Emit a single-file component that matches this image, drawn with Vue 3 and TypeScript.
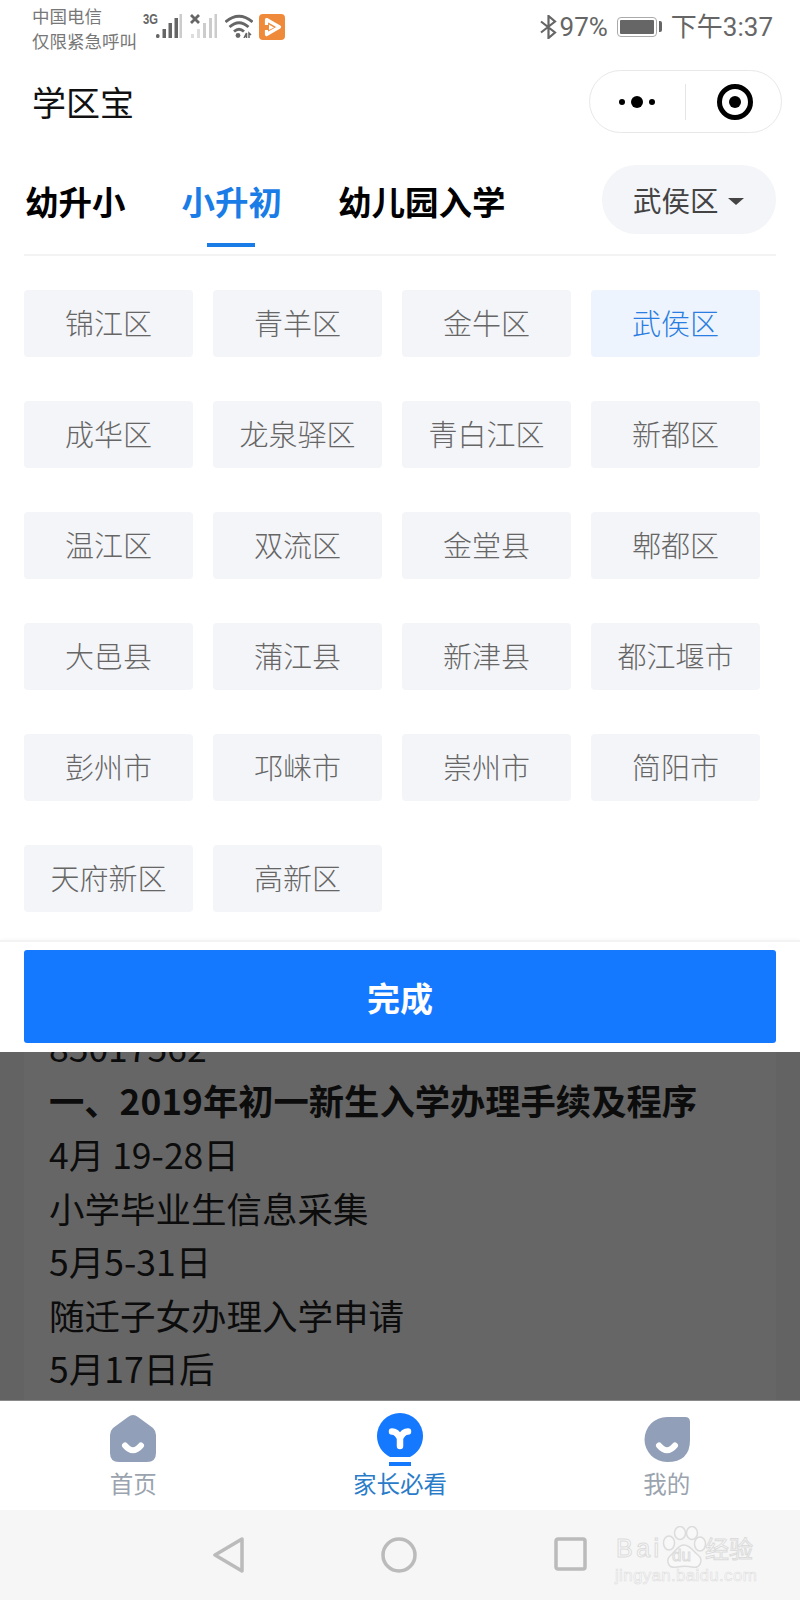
<script setup lang="ts">
const tabs = [
  { label: '幼升小', active: false },
  { label: '小升初', active: true },
  { label: '幼儿园入学', active: false },
]

const districts = [
  '锦江区', '青羊区', '金牛区', '武侯区',
  '成华区', '龙泉驿区', '青白江区', '新都区',
  '温江区', '双流区', '金堂县', '郫都区',
  '大邑县', '蒲江县', '新津县', '都江堰市',
  '彭州市', '邛崃市', '崇州市', '简阳市',
  '天府新区', '高新区',
]
const activeDistrict = '武侯区'

const articleLines = [
  { text: '85017562', bold: false },
  { text: '一、2019年初一新生入学办理手续及程序', bold: true },
  { text: '4月 19-28日', bold: false },
  { text: '小学毕业生信息采集', bold: false },
  { text: '5月5-31日', bold: false },
  { text: '随迁子女办理入学申请', bold: false },
  { text: '5月17日后', bold: false },
]
</script>

<template>
  <div class="page">
    <div class="status-bar">
      <div class="carrier">
        <div>中国电信</div>
        <div>仅限紧急呼叫</div>
      </div>
      <span class="net-type">3G</span>
      <svg class="signal" width="27" height="24" viewBox="0 0 27 24">
        <rect x="1" y="20" width="3.5" height="4" rx="1.5" fill="#666" />
        <rect x="7.5" y="15" width="3.5" height="9" fill="#666" />
        <rect x="13.5" y="9" width="3.5" height="15" fill="#666" />
        <rect x="19.5" y="4" width="3.5" height="20" fill="#666" />
        <rect x="24.5" y="0" width="2.5" height="24" fill="#ccc" />
      </svg>
      <svg class="signal signal-off" width="27" height="24" viewBox="0 0 27 24">
        <path d="M1 1l8 8M9 1l-8 8" stroke="#666" stroke-width="2.8" fill="none" />
        <rect x="1" y="20" width="3" height="4" fill="#ddd" />
        <rect x="7" y="15" width="3" height="9" fill="#ddd" />
        <rect x="13" y="9" width="3" height="15" fill="#ccc" />
        <rect x="19" y="4" width="3" height="20" fill="#ccc" />
        <rect x="24.5" y="0" width="2.5" height="24" fill="#ccc" />
      </svg>
      <svg class="wifi" width="28" height="24" viewBox="0 0 28 24" fill="none" stroke="#666" stroke-width="2.8">
        <path d="M0.5 8Q14 -3.5 27.5 8" />
        <path d="M4.5 13Q14 4.5 23.5 13" />
        <path d="M9 17.5Q14 13 19 17.5" />
        <circle cx="13" cy="21.5" r="2.4" fill="#666" stroke="none" />
        <path d="M19 24l2.5 -5v5M24 24v-5l2 2" stroke-width="1.5" />
      </svg>
      <svg class="app-badge" width="26" height="26" viewBox="0 0 26 26">
        <rect width="26" height="26" rx="4" fill="#ee8a3a" />
        <path d="M7.5 11V5.5L20.5 13L7.5 20.5V16" fill="none" stroke="#fff" stroke-width="3.2" stroke-linejoin="round" />
        <path d="M10 10.5L15 13.5L10 16Z" fill="#fff" />
      </svg>
      <div class="status-right">
        <svg width="17" height="24" viewBox="0 0 17 24" fill="none" stroke="#666" stroke-width="2.2">
          <path d="M1 6.5L15 17.5L8.5 23V1L15 6.5L1 17.5" />
        </svg>
        <span class="battery-text">97%</span>
        <div class="battery"><div class="battery-fill"></div></div>
        <span class="clock">下午3:37</span>
      </div>
    </div>

    <div class="nav-header">
      <span class="app-title">学区宝</span>
      <div class="capsule">
        <svg width="46" height="14" viewBox="0 0 46 14" fill="#000">
          <circle cx="3" cy="7" r="3" />
          <circle cx="18" cy="7" r="6" />
          <circle cx="33" cy="7" r="3" />
        </svg>
        <span class="capsule-line"></span>
        <svg width="36" height="36" viewBox="0 0 36 36">
          <circle cx="18" cy="18" r="15.5" fill="none" stroke="#000" stroke-width="5" />
          <circle cx="18" cy="18" r="6" fill="#000" />
        </svg>
      </div>
    </div>

    <div class="tabs">
      <div v-for="tab in tabs" :key="tab.label" class="tab" :class="{ 'tab--active': tab.active }">
        <span>{{ tab.label }}</span>
        <i v-if="tab.active" class="tab-line"></i>
      </div>
      <div class="area-select">
        <span>武侯区</span>
        <i class="caret"></i>
      </div>
    </div>

    <div class="district-grid">
      <div
        v-for="name in districts"
        :key="name"
        class="district"
        :class="{ 'district--active': name === activeDistrict }"
      >
        {{ name }}
      </div>
    </div>

    <div class="footer">
      <button class="done-btn">完成</button>
    </div>

    <div class="dimmed">
      <div class="article">
        <p v-for="line in articleLines" :key="line.text" :class="{ bold: line.bold }">{{ line.text }}</p>
      </div>
    </div>

    <div class="tabbar">
      <div class="tabbar-item">
        <svg width="46" height="54" viewBox="0 0 46 54">
          <path d="M18 4Q23 0 28 4L43 15Q46 18 46 22V40Q46 49 37 49H9Q0 49 0 40V22Q0 18 3 15Z" fill="#919fb8" />
          <path d="M15 32.5Q23 42 31 32.5" fill="none" stroke="#fff" stroke-width="6" stroke-linecap="round" />
        </svg>
        <span>首页</span>
      </div>
      <div class="tabbar-item tabbar-item--active">
        <svg width="46" height="54" viewBox="0 0 46 54">
          <path d="M13 44C5 40 0 32 0 23A23 23 0 0 1 46 23C46 32 41 40 33 44Z" fill="#1479ff" />
          <path d="M15 18.5C19 18.5 21 21 23 25C25 21 27 18.5 31 18.5M23 25V33" fill="none" stroke="#fff" stroke-width="6.5" stroke-linecap="round" stroke-linejoin="round" />
          <rect x="12" y="49" width="22" height="4" fill="#1479ff" />
        </svg>
        <span>家长必看</span>
      </div>
      <div class="tabbar-item">
        <svg width="46" height="54" viewBox="0 0 46 54">
          <path d="M23 4H41Q46 4 46 9V27Q46 49 23 49A22.5 22.5 0 0 1 23 4Z" fill="#919fb8" />
          <path d="M15 32.5Q23 42 31 32.5" fill="none" stroke="#fff" stroke-width="6" stroke-linecap="round" />
        </svg>
        <span>我的</span>
      </div>
    </div>

    <div class="system-nav">
      <svg width="31" height="36" viewBox="0 0 31 36">
        <path d="M29 2V34L2 18Z" fill="none" stroke="#bbb" stroke-width="3.5" stroke-linejoin="round" />
      </svg>
      <svg width="36" height="36" viewBox="0 0 36 36">
        <circle cx="18" cy="18" r="16" fill="none" stroke="#bbb" stroke-width="3.5" />
      </svg>
      <svg width="33" height="34" viewBox="0 0 33 34">
        <rect x="2" y="2" width="29" height="30" rx="2" fill="none" stroke="#bbb" stroke-width="3.5" />
      </svg>

      <div class="watermark">
        <span class="wm-bai">Bai</span>
        <svg class="wm-paw" width="50" height="50" viewBox="0 0 50 50" fill="#f8f8f8" stroke="#dcdcdc" stroke-width="1.5">
          <ellipse cx="7" cy="17" rx="5.5" ry="7" />
          <ellipse cx="18" cy="7" rx="5.5" ry="6.5" />
          <ellipse cx="30" cy="7" rx="5.5" ry="6.5" />
          <ellipse cx="38" cy="18" rx="5.5" ry="7" />
          <path d="M22 19C28 19 31 25 36 29C42 34 38 43 30 41C26 40 20 40 15 41C6 43 3 34 9 29C14 25 16 19 22 19Z" />
        </svg>
        <span class="wm-du">du</span>
        <span class="wm-cn">经验</span>
        <span class="wm-url">jingyan.baidu.com</span>
      </div>
    </div>
  </div>
</template>

<style scoped>
.page {
  position: relative;
  width: 800px;
  height: 1600px;
  overflow: hidden;
  display: flex;
  flex-direction: column;
  background: #fff;
  font-family: "Noto Sans CJK SC", "Noto Sans", sans-serif;
  color: #000;
}

.status-bar {
  height: 70px;
  flex: none;
  display: flex;
  align-items: flex-start;
  padding-left: 32px;
  box-sizing: border-box;
  color: #666;
}

.carrier {
  width: 105px;
  margin-top: 3px;
  font-size: 17.5px;
  line-height: 25px;
  color: #777;
  white-space: nowrap;
}

.net-type {
  width: 12px;
  margin: 12px 0 0 6px;
  font-family: "Liberation Sans", sans-serif;
  font-size: 14px;
  line-height: 14px;
  font-weight: 700;
  transform: scaleX(0.8);
  transform-origin: left;
}

.signal {
  margin-top: 14px;
}

.signal-off {
  margin-left: 8px;
}

.wifi {
  margin: 14px 0 0 8px;
}

.app-badge {
  margin: 14px 0 0 6px;
}

.status-right {
  margin: 15px 27px 0 auto;
  height: 24px;
  display: flex;
  align-items: center;
  font-family: Roboto, "Noto Sans CJK SC", sans-serif;
}

.battery-text {
  margin-left: 3px;
  font-size: 26px;
  line-height: 24px;
}

.battery {
  position: relative;
  width: 40px;
  height: 20px;
  margin-left: 9px;
  box-sizing: border-box;
  border: 1.5px solid #aaa;
  border-radius: 4px;
  padding: 2px;
}

.battery::after {
  content: "";
  position: absolute;
  right: -6px;
  top: 3px;
  width: 3px;
  height: 11px;
  background: #666;
  border-radius: 0 2px 2px 0;
}

.battery-fill {
  height: 100%;
  background: #666;
  border-radius: 1px;
}

.clock {
  margin-left: 14px;
  font-size: 26px;
  line-height: 24px;
}

.nav-header {
  height: 63px;
  flex: none;
  display: flex;
  align-items: center;
  justify-content: space-between;
  padding: 0 18px 0 32px;
  margin-bottom: 32px;
}

.app-title {
  font-size: 34px;
  font-weight: 400;
  color: #111;
}

.capsule {
  width: 193px;
  height: 63px;
  box-sizing: border-box;
  border: 1.5px solid #e8e8e8;
  border-radius: 32px;
  display: flex;
  align-items: center;
  padding-left: 29px;
}

.capsule-line {
  width: 1px;
  height: 36px;
  margin: 0 31px 0 20px;
  background: #e5e5e5;
}

.tabs {
  flex: none;
  height: 91px;
  margin: 0 24px;
  padding-left: 1px;
  box-sizing: border-box;
  display: flex;
  align-items: flex-start;
  gap: 56px;
  border-bottom: 2px solid #f3f3f3;
}

.tab {
  display: flex;
  flex-direction: column;
  align-items: center;
  font-size: 33.5px;
  line-height: 72px;
  font-weight: 700;
  white-space: nowrap;
}

.tab--active {
  color: #1a7ce6;
}

.tab-line {
  width: 48px;
  height: 4px;
  margin: 6px 2px 0 0;
  background: #1a7ce6;
}

.area-select {
  margin-left: auto;
  width: 174px;
  height: 69px;
  flex: none;
  box-sizing: border-box;
  padding-left: 31px;
  border-radius: 34px;
  background: #f4f5f8;
  display: flex;
  align-items: center;
  font-size: 28.5px;
  color: #444;
}

.caret {
  margin: 4px 0 0 9px;
  border-left: 8px solid transparent;
  border-right: 8px solid transparent;
  border-top: 7px solid #444;
}

.district-grid {
  flex: none;
  display: grid;
  grid-template-columns: repeat(4, 169px);
  grid-auto-rows: 67px;
  gap: 44px 20px;
  padding-left: 24px;
  margin: 34px 0 28px;
}

.district {
  display: flex;
  align-items: center;
  justify-content: center;
  padding-bottom: 3px;
  box-sizing: border-box;
  background: #f4f5f8;
  border-radius: 4px;
  font-size: 29px;
  font-weight: 300;
  color: #666;
  white-space: nowrap;
}

.district--active {
  background: #eef4fd;
  color: #2a7de1;
}

.footer {
  flex: none;
  padding: 8px 24px 9px;
  border-top: 2px solid #f3f3f3;
  box-shadow: 0 -2px 3px rgba(0, 0, 0, 0.02);
}

.done-btn {
  display: block;
  width: 100%;
  height: 93px;
  border: none;
  border-radius: 3px;
  background: #1479ff;
  color: #fff;
  font-family: inherit;
  font-size: 33px;
  font-weight: 700;
  padding: 0;
}

.dimmed {
  flex: none;
  height: 349px;
  padding: 0 24px;
  overflow: hidden;
  background: #636363;
  border-bottom: 1px solid #8a8a8a;
  box-sizing: border-box;
}

.article {
  height: 100%;
  padding: 0 25px 5px;
  box-sizing: border-box;
  background: #666;
  display: flex;
  flex-direction: column;
  justify-content: flex-end;
  color: #0c0c0c;
  font-size: 35.5px;
  line-height: 53.6px;
}

.article p {
  flex: none;
  margin: 0;
  white-space: nowrap;
}

.article .bold {
  font-size: 35.3px;
  font-weight: 700;
}

.tabbar {
  flex: none;
  height: 109px;
  display: grid;
  grid-template-columns: repeat(3, 1fr);
  padding-top: 12px;
  box-sizing: border-box;
  background: #fff;
}

.tabbar-item {
  display: flex;
  flex-direction: column;
  align-items: center;
  font-size: 23.5px;
  line-height: 28px;
  color: #9aa3ae;
}

.tabbar-item--active {
  color: #2a7cc9;
}

.tabbar-item span {
  margin-top: 2px;
}

.system-nav {
  position: relative;
  flex: none;
  height: 90px;
  box-sizing: border-box;
  padding: 27px 213px 0 213px;
  display: flex;
  justify-content: space-between;
  align-items: flex-start;
  background: #f6f6f6;
}

.watermark {
  position: absolute;
  left: 612px;
  top: 4px;
  width: 150px;
  height: 76px;
  font-family: "Liberation Sans", sans-serif;
  color: #fbfbfb;
  -webkit-text-stroke: 1px #dcdcdc;
}

.wm-bai {
  position: absolute;
  left: 4px;
  top: 20px;
  font-size: 25px;
  line-height: 28px;
  letter-spacing: 3.5px;
}

.wm-paw {
  position: absolute;
  left: 50px;
  top: 12px;
}

.wm-du {
  position: absolute;
  left: 60px;
  top: 32px;
  font-size: 17px;
  line-height: 20px;
}

.wm-cn {
  position: absolute;
  left: 93px;
  top: 20px;
  font-family: "Noto Sans CJK SC", sans-serif;
  font-size: 24px;
  line-height: 28px;
}

.wm-url {
  position: absolute;
  left: 3px;
  top: 52px;
  font-size: 17px;
  line-height: 20px;
  letter-spacing: 0.3px;
  -webkit-text-stroke: 0.6px #dedede;
  white-space: nowrap;
}
</style>
